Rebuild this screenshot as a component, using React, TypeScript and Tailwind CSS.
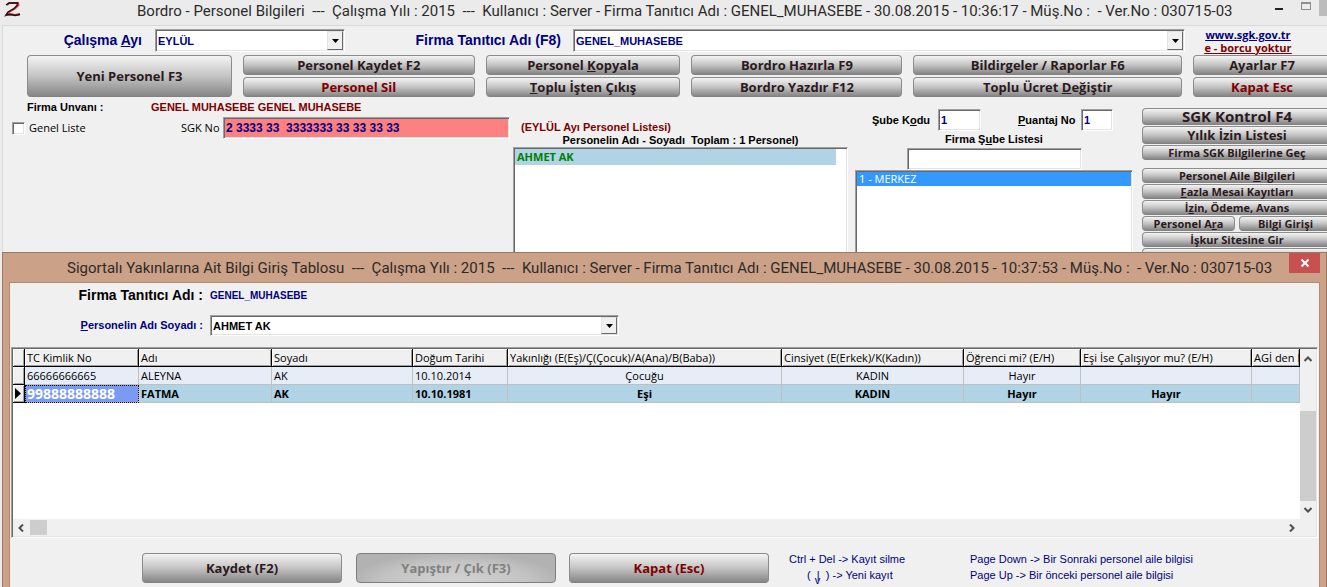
import type { ReactNode } from 'react';
import clsx from 'clsx';

const sunkenEdge =
  'border border-t-[#a0a0a0] border-l-[#a0a0a0] border-r-white border-b-white shadow-[inset_1px_1px_0_#696969,inset_-1px_-1px_0_#e3e3e3]';
const sunken = `${sunkenEdge} bg-white`;

const arial = 'font-["Liberation_Sans",sans-serif]';
const tahoma = 'font-["Open_Sans",sans-serif]';
const caption = 'font-["Roboto",sans-serif] text-[15px] whitespace-pre text-[#2b2b2b]';

type ButtonProps = {
  children?: ReactNode;
  className?: string;
  disabled?: boolean;
  label?: string;
};

function GlossButton({ children, className, disabled, label }: ButtonProps) {
  return (
    <button
      type="button"
      disabled={disabled}
      aria-label={label}
      className={clsx(
        'flex min-w-0 items-center justify-center rounded-[4px] border font-bold leading-none whitespace-nowrap',
        tahoma,
        disabled
          ? 'border-[#7d7d7d] bg-[radial-gradient(ellipse_at_50%_100%,#d2d2d2_0%,#c4c4c4_50%,#b2b2b2_75%)] text-[#808080]'
          : 'border-[#8c8c8c] border-b-[#828282] bg-linear-to-b from-[#f4f4f4] via-[#c4c4c4] to-[#868686]',
        className,
      )}
    >
      <span>{children}</span>
    </button>
  );
}

type ComboProps = {
  id: string;
  value: string;
  className?: string;
  selectClassName: string;
};

function Combo({ id, value, className, selectClassName }: ComboProps) {
  return (
    <div className={clsx('relative flex items-center', sunken, className)}>
      <select
        id={id}
        className={clsx('w-full appearance-none px-0.5 text-[11px] leading-4 font-bold outline-none', arial, selectClassName)}
      >
        <option>{value}</option>
      </select>
      <span className="pointer-events-none absolute top-px right-px bottom-px flex w-4 items-center justify-center border border-t-[#e3e3e3] border-l-[#e3e3e3] border-r-[#696969] border-b-[#696969] bg-[#f0f0f0]">
        <svg width="7" height="4" viewBox="0 0 7 4">
          <path d="M0 0h7L3.5 4z" fill="#000" />
        </svg>
      </span>
    </div>
  );
}

function Logo() {
  return (
    <svg width="18" height="18" viewBox="0 0 18 18" fill="none">
      <path d="M3 5L5.500 3H14L14.500 5L11 8.500L5 12L2.500 15L6 14L11 15L16 14" stroke="#e0303a" strokeWidth="2" />
      <path d="M2 5L5 3H13.500L13 5.500L10 8.500L4 12L2 15L6 14.500L11 15.500L16 14.500" stroke="#1a1012" strokeWidth="1.300" />
    </svg>
  );
}

function MainToolbar() {
  return (
    <div className="-mr-1 ml-[24px] grid grid-cols-[205fr_232fr_195fr_211fr_269fr_138fr] grid-rows-[20px_20px] gap-x-[11px] gap-y-0.5 text-[13px] text-[#2b1a1e]">
      <GlossButton className="row-span-2">Yeni Personel F3</GlossButton>
      <GlossButton>Personel Kaydet F2</GlossButton>
      <GlossButton>Personel <u>K</u>opyala</GlossButton>
      <GlossButton>Bordro Hazırla F9</GlossButton>
      <GlossButton>Bildirgeler / Raporlar F6</GlossButton>
      <GlossButton>Ayarlar F7</GlossButton>
      <GlossButton className="text-[#800000]">Personel Sil</GlossButton>
      <GlossButton><u>T</u>oplu İşten Çıkış</GlossButton>
      <GlossButton>Bordro Yazdır F12</GlossButton>
      <GlossButton>Toplu Ücret <u>D</u>eğiştir</GlossButton>
      <GlossButton className="text-[#800000]">Kapat Esc</GlossButton>
    </div>
  );
}

function CompanyInfo() {
  return (
    <div className="pr-[3px]">
      <div className={clsx('flex pt-0.5 pl-[15px] text-[11px] leading-4 font-bold', arial)}>
        <span className="w-[124px] text-black">Firma Unvanı :</span>
        <span className="text-[#800000]">GENEL MUHASEBE GENEL MUHASEBE</span>
      </div>
      <div className={clsx('mt-0.5 flex items-center text-[11px] text-black', tahoma)}>
        <label className="flex w-[169px] items-center gap-1">
          <input type="checkbox" className={clsx('size-[13px] appearance-none', sunken)} />
          Genel Liste
        </label>
        <label htmlFor="sgk" className="w-[42px]">SGK No</label>
        <input
          id="sgk"
          defaultValue="2 3333 33  3333333 33 33 33 33"
          className={clsx('h-[22px] min-w-0 flex-1 bg-[#ff8080] px-0.5 text-[12px] font-bold text-[#000080] outline-none', arial, sunkenEdge)}
        />
      </div>
    </div>
  );
}

function PersonelList() {
  return (
    <div className={clsx('flex flex-col pt-6 pr-[7px] text-[11px] leading-[13px] font-bold', arial)}>
      <p className="pl-2 text-[#800000]">(EYLÜL Ayı Personel Listesi)</p>
      <p className="text-center whitespace-pre text-black">{'Personelin Adı - Soyadı  Toplam : 1 Personel)'}</p>
      <ul className={clsx('flex-1 p-px', sunken, tahoma)}>
        <li className="mr-2.5 h-4 bg-[#b0d3e6] px-0.5 leading-4 text-[#008000]">AHMET AK</li>
      </ul>
    </div>
  );
}

function BranchList() {
  return (
    <div className={clsx('flex flex-col pt-3 pr-[9px] text-[11px] font-bold', arial)}>
      <div className="flex items-center pl-[17px] text-black">
        <label htmlFor="sube" className="w-[66px]">Şube K<u>o</u>du</label>
        <input id="sube" defaultValue="1" className={clsx('h-[22px] w-[43px] px-0.5 text-[#000080] outline-none', sunken)} />
        <label htmlFor="puantaj" className="ml-[37px] w-[63px]"><u>P</u>uantaj No</label>
        <input id="puantaj" defaultValue="1" className={clsx('h-[22px] w-8 px-0.5 text-[#000080] outline-none', sunken)} />
      </div>
      <label htmlFor="sube-ara" className="text-center leading-[17px] text-black">Firma Ş<u>u</u>be Listesi</label>
      <input id="sube-ara" className={clsx('mx-auto h-[22px] w-[175px] px-1 outline-none', sunken)} />
      <ul className={clsx('flex-1 p-px font-normal', sunken, tahoma)}>
        <li className="h-[14px] bg-[#3399ff] px-0.5 leading-[14px] text-white">1 - MERKEZ</li>
      </ul>
    </div>
  );
}

function SideButtons() {
  return (
    <div className="flex flex-col gap-px pt-[11px] text-[11px] text-[#2b1a1e]">
      <GlossButton className="h-[17px] text-[15px]">SGK Kontrol F4</GlossButton>
      <GlossButton className="h-[18px] text-[13px]">Yılık İzin Listesi</GlossButton>
      <GlossButton className="mb-[7px] h-[15px]">Firma SGK Bilgilerine Geç</GlossButton>
      <GlossButton className="h-[15px]">Personel Aile <u>B</u>ilgileri</GlossButton>
      <GlossButton className="h-[15px]"><u>F</u>azla Mesai Kayıtları</GlossButton>
      <GlossButton className="h-[15px]">İ<u>z</u>in, Ödeme, Avans</GlossButton>
      <div className="grid grid-cols-2 gap-1">
        <GlossButton className="h-[15px]">Personel A<u>r</u>a</GlossButton>
        <GlossButton className="h-[15px]">Bilgi Girişi</GlossButton>
      </div>
      <GlossButton className="h-[15px]">İşkur Sitesine Gir</GlossButton>
      <GlossButton className="h-[15px]" label="İşkur" />
    </div>
  );
}

function MainWindow() {
  return (
    <div className="flex min-h-screen flex-col">
      <header className="flex h-[25px] items-start pl-1">
        <Logo />
        <h1 className={clsx('flex-1 overflow-hidden pl-[115px] leading-[22px]', caption)}>
          {'Bordro - Personel Bilgileri  ---  Çalışma Yılı : 2015  ---  Kullanıcı : Server - Firma Tanıtıcı Adı : GENEL_MUHASEBE - 30.08.2015 - 10:36:17 - Müş.No :  - Ver.No : 030715-03'}
        </h1>
        <button type="button" aria-label="Simge durumuna küçült" className="mt-2 mr-[18px] h-0.5 w-2 bg-[#222]" />
        <button type="button" aria-label="Ekranı kapla" className="mt-0.5 mr-2 h-2 w-2.5 border border-t-2 border-[#8e8e8e]" />
        <button type="button" aria-label="Pencereyi kapat" className="h-4 w-2 bg-[#bcbcbc]" />
      </header>
      <main className="ml-0.5 flex flex-1 flex-col border-t border-l border-[#d9d9d9] bg-[#f0f0f0]">
        <div className="flex h-[29px] items-center">
          <label htmlFor="ay" className={clsx('w-[152px] pr-[13px] text-right text-[14px] font-bold text-[#000080]', arial)}>
            Çalışma <u>A</u>yı
          </label>
          <Combo id="ay" value="EYLÜL" className="h-[23px] w-[190px]" selectClassName="text-[#000080]" />
          <label htmlFor="firma" className={clsx('w-[228px] pr-3 text-right text-[14px] font-bold text-[#000080]', arial)}>
            Firma Tanıtıcı Adı (F8)
          </label>
          <Combo id="firma" value="GENEL_MUHASEBE" className="h-[23px] flex-1" selectClassName="text-[#000080]" />
          <div className={clsx('flex w-[142px] flex-col items-center pr-4 text-[11px] leading-[13px] font-bold underline', tahoma)}>
            <a href="#sgk" className="text-[#000080]">www.sgk.gov.tr</a>
            <a href="#borc" className="text-[#800000]">e - borcu yoktur</a>
          </div>
        </div>
        <MainToolbar />
        <div className="-mr-[5px] ml-[9px] grid flex-1 grid-cols-[501fr_342fr_287fr_190fr]">
          <CompanyInfo />
          <PersonelList />
          <BranchList />
          <SideButtons />
        </div>
      </main>
    </div>
  );
}

const columns = [
  'TC Kimlik No',
  'Adı',
  'Soyadı',
  'Doğum Tarihi',
  'Yakınlığı (E(Eş)/Ç(Çocuk)/A(Ana)/B(Baba))',
  'Cinsiyet (E(Erkek)/K(Kadın))',
  'Öğrenci mi? (E/H)',
  'Eşi İse Çalışıyor mu? (E/H)',
  'AGİ den F',
];

const rows = [
  ['66666666665', 'ALEYNA', 'AK', '10.10.2014', 'Çocuğu', 'KADIN', 'Hayır', '', ''],
  ['99888888888', 'FATMA', 'AK', '10.10.1981', 'Eşi', 'KADIN', 'Hayır', 'Hayır', ''],
];

const headCell =
  'overflow-hidden border-r border-b border-black bg-[#f0f0f0] px-0.5 text-left font-normal shadow-[inset_1px_1px_0_#fff,inset_-1px_-1px_0_#a0a0a0]';

function RelativesTable() {
  return (
    <table className={clsx('w-full table-fixed border-separate border-spacing-0 text-[11px] leading-none whitespace-nowrap text-black', tahoma)}>
      <colgroup>
        <col className="w-3" />
        <col className="w-[114px]" />
        <col className="w-[133px]" />
        <col className="w-[141px]" />
        <col className="w-[95px]" />
        <col className="w-[274px]" />
        <col className="w-[182px]" />
        <col className="w-[117px]" />
        <col className="w-[171px]" />
        <col />
      </colgroup>
      <thead>
        <tr className="h-[18px]">
          <th className={headCell} aria-label="İmleç" />
          {columns.map((column) => (
            <th key={column} className={headCell}>{column}</th>
          ))}
        </tr>
      </thead>
      <tbody>
        {rows.map((row, i) => {
          const current = i === 1;
          return (
            <tr key={row[0]} className={clsx('h-[18px]', current ? 'bg-[#b0d3e6] font-bold' : 'bg-[#e6edf7]')}>
              <td className={headCell}>
                {current && (
                  <svg width="6" height="11" viewBox="0 0 6 11">
                    <path d="M0 0L6 5.500L0 11z" fill="#000" />
                  </svg>
                )}
              </td>
              {row.map((cell, j) => (
                <td
                  key={j}
                  className={clsx(
                    'overflow-hidden border-r border-b border-[#c0c0c0] px-0.5',
                    j > 3 && 'text-center',
                    current && j === 0 && 'bg-[#7b9bf2] text-[14px] text-white outline-1 -outline-offset-1 outline-dotted outline-black',
                  )}
                >
                  {cell}
                </td>
              ))}
            </tr>
          );
        })}
      </tbody>
    </table>
  );
}

function Chevron({ d }: { d: string }) {
  return (
    <svg width="8" height="8" viewBox="0 0 8 8" fill="none" stroke="#505050" strokeWidth="2">
      <path d={d} />
    </svg>
  );
}

function DataGrid() {
  return (
    <div className={clsx('mx-px grid h-[191px] grid-cols-[1fr_16px] grid-rows-[1fr_17px] p-px', sunken)}>
      <div className="overflow-hidden">
        <RelativesTable />
      </div>
      <div className="flex flex-col items-center bg-[#f0f0f0]">
        <div className="flex h-[62px] items-start pt-1.5"><Chevron d="M0.500 6L4 2.500L7.500 6" /></div>
        <div className="w-full flex-1 bg-[#cdcdcd]" />
        <div className="flex h-[18px] items-center"><Chevron d="M0.500 2L4 5.500L7.500 2" /></div>
      </div>
      <div className="flex items-center justify-between bg-[#f0f0f0] pl-1">
        <div className="flex items-center gap-[5px]">
          <Chevron d="M6 0.500L2.500 4L6 7.500" />
          <span className="h-[15px] w-[17px] bg-[#cdcdcd]" />
        </div>
        <span className="pr-1"><Chevron d="M2 0.500L5.500 4L2 7.500" /></span>
      </div>
      <div className="bg-[#f0f0f0]" />
    </div>
  );
}

function RelativesDialog() {
  return (
    <section
      role="dialog"
      aria-labelledby="dialog-title"
      className="absolute top-[252px] right-0 bottom-0 left-0.5 flex flex-col border border-b-0 border-[#9c7761] bg-[#cba187] px-1.5"
    >
      <header className="flex h-[29px] items-start">
        <h2 id="dialog-title" className={clsx('flex-1 overflow-hidden pl-[58px] leading-[30px]', caption)}>
          {'Sigortalı Yakınlarına Ait Bilgi Giriş Tablosu  ---  Çalışma Yılı : 2015  ---  Kullanıcı : Server - Firma Tanıtıcı Adı : GENEL_MUHASEBE - 30.08.2015 - 10:37:53 - Müş.No :  - Ver.No : 030715-03'}
        </h2>
        <button type="button" aria-label="Kapat" className="flex h-5 w-[31px] items-center justify-center bg-[#c75050]">
          <svg width="8" height="8" viewBox="0 0 8 8" stroke="#fff" strokeWidth="2">
            <path d="M0.500 0.500L7.500 7.500M7.500 0.500L0.500 7.500" />
          </svg>
        </button>
      </header>
      <div className="flex flex-1 flex-col border border-b-0 border-[#b08a73] bg-[#f0f0f0]">
        <div className={clsx('flex h-6 items-center font-bold', arial)}>
          <span className="w-[200px] pr-[7px] text-right text-[14px] text-black">Firma Tanıtıcı Adı :</span>
          <span className="text-[10px] text-[#000080]">GENEL_MUHASEBE</span>
        </div>
        <div className="mt-2 mb-[11px] flex items-center">
          <label htmlFor="personel" className={clsx('w-[200px] pr-[7px] text-right text-[11px] font-bold text-[#000080]', arial)}>
            <u>P</u>ersonelin Adı Soyadı :
          </label>
          <Combo id="personel" value="AHMET AK" className="h-[21px] w-[409px]" selectClassName="text-black" />
        </div>
        <DataGrid />
        <div className="mt-[13px] flex items-start pl-[132px] text-[13px] text-[#2b1a1e]">
          <GlossButton className="mt-0.5 h-[30px] w-[200px]">Kaydet (F2)</GlossButton>
          <GlossButton className="mt-0.5 ml-3.5 h-[30px] w-[200px]" disabled>Yapıştır / Çık (F3)</GlossButton>
          <GlossButton className="mt-0.5 ml-[13px] h-[30px] w-[200px] text-[#800000]">Kapat (Esc)</GlossButton>
          <div className={clsx('ml-5 w-[181px] text-[11px] leading-4 text-[#000080]', arial)}>
            <p>Ctrl + Del -&gt; Kayıt silme</p>
            <p className="pl-[18px] whitespace-pre">
              {'(  '}
              <span className="relative">
                |<span className="absolute top-1.5 -left-0.5 leading-none">v</span>
              </span>
              {'  ) -> Yeni kayıt'}
            </p>
          </div>
          <div className={clsx('text-[11px] leading-4 text-[#000080]', arial)}>
            <p>Page Down -&gt; Bir Sonraki personel aile bilgisi</p>
            <p>Page Up -&gt; Bir önceki personel aile bilgisi</p>
          </div>
        </div>
      </div>
    </section>
  );
}

export default function App() {
  return (
    <div className="relative h-screen overflow-hidden bg-[#ebebeb]">
      <MainWindow />
      <RelativesDialog />
    </div>
  );
}
